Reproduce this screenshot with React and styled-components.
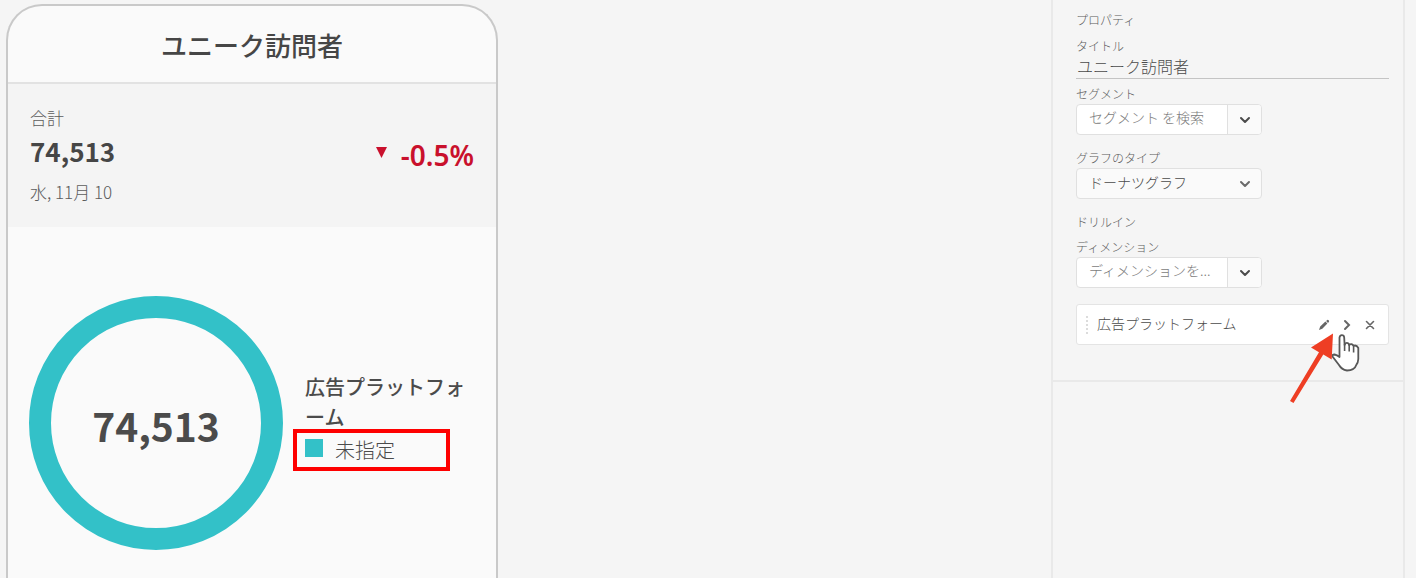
import React from "react";
import styled, { createGlobalStyle } from "styled-components";

const GlobalStyle = createGlobalStyle`
  *, *::before, *::after { box-sizing: border-box; }
  body {
    margin: 0;
    background: #f5f5f5;
    color: #4b4b4b;
    font-family: "Noto Sans CJK JP", "Noto Sans", sans-serif;
  }
  button, input, select { font: inherit; color: inherit; margin: 0; }
  h1, h2, h3, p { margin: 0; padding: 0; font-weight: inherit; }
`;

const Page = styled.div`
  display: flex;
  min-height: 100vh;
  padding-right: 11px;
`;

const Canvas = styled.main`
  flex: 1;
  display: flex;
  padding: 4px 0 0 6px;
`;

const Card = styled.article`
  width: 492px;
  background: #fafafa;
  border: 2px solid #c9c9c9;
  border-bottom: 0;
  border-radius: 36px 36px 0 0;
  overflow: hidden;
`;

const CardTitle = styled.h1`
  padding: 20px 0 18px;
  border-bottom: 2px solid #e2e2e2;
  text-align: center;
  font-size: 26px;
  line-height: 38px;
  font-weight: 500;
  color: #464646;
`;

const Summary = styled.section`
  display: flex;
  justify-content: space-between;
  align-items: center;
  padding: 20px 22px 21px;
  background: #f4f4f4;
`;

const SummaryNote = styled.p`
  font-size: 17px;
  line-height: 28px;
  font-weight: 300;
  color: #5c5c5c;
`;

const SummaryValue = styled.p`
  font-size: 26px;
  line-height: 38px;
  padding-bottom: 8px;
  font-weight: 700;
  color: #464646;
`;

const Change = styled.p`
  display: flex;
  align-items: center;
  gap: 14px;
  font-family: "Noto Sans", sans-serif;
  font-size: 28px;
  line-height: 36px;
  font-weight: 600;
  color: #c9102c;
`;

const ChartRow = styled.section`
  display: flex;
  align-items: center;
  gap: 22px;
  padding: 69px 20px 28px 21px;
`;

const Donut = styled.div`
  flex: none;
  display: flex;
  align-items: center;
  justify-content: center;
  width: 254px;
  height: 254px;
  border: 22px solid #33c1c8;
  border-radius: 50%;
  font-size: 39px;
  line-height: 60px;
  padding-top: 4px;
  font-weight: 700;
`;

const Legend = styled.div`
  flex: 1;
  min-width: 0;
  padding-bottom: 4px;
`;

const LegendTitle = styled.h2`
  font-size: 20px;
  line-height: 30px;
  font-weight: 500;
  line-break: anywhere;
`;

const LegendItem = styled.div`
  display: flex;
  align-items: center;
  gap: 12px;
  width: 157px;
  height: 42px;
  margin: -3px 0 0 -12px;
  padding: 0 8px;
  border: 4px solid #fe0000;
  font-size: 20px;
  line-height: 34px;
  font-weight: 300;
`;

const Swatch = styled.span`
  width: 18px;
  height: 18px;
  margin-bottom: 4px;
  background: #33c1c8;
`;

const Panel = styled.aside`
  width: 354px;
  border: 2px solid #e9e9e9;
  border-width: 0 2px;
  background: #f5f5f5;
  font-weight: 300;
`;

const Properties = styled.form`
  display: flex;
  flex-direction: column;
  gap: 15px;
  padding: 12px 14px 35px 23px;
  border-bottom: 2px solid #e9e9e9;
`;

const Group = styled.div`
  display: flex;
  flex-direction: column;
  gap: ${(p) => p.$gap}px;
`;

const Heading = styled.h3`
  font-size: 12px;
  line-height: 16px;
  color: #5c5c5c;
`;

const Field = styled.div`
  display: flex;
  flex-direction: column;
  gap: 2px;
`;

const Label = styled.label`
  font-size: 12px;
  line-height: 16px;
  color: #5c5c5c;
`;

const TitleInput = styled.input`
  width: 100%;
  height: 23px;
  padding: 0 0 2px 1px;
  border: 0;
  border-bottom: 1px solid #c4c4c4;
  outline: 0;
  background: none;
  font-size: 16px;
`;

const Control = styled.div`
  position: relative;
  display: flex;
  width: 186px;
  height: 31px;
  border: 1px solid #e0e0e0;
  border-radius: 4px;
  overflow: hidden;
  background: ${(p) => (p.$muted ? "#fafafa" : "#fff")};
`;

const SearchInput = styled.input`
  flex: 1;
  min-width: 0;
  padding: 0 0 5px 12px;
  border: 0;
  outline: 0;
  background: none;
  font-size: 14px;
  &::placeholder { color: #7c7c7c; opacity: 1; }
`;

const OpenButton = styled.button`
  display: flex;
  align-items: center;
  justify-content: center;
  width: 34px;
  padding: 0;
  border: 0;
  border-left: 1px solid #e0e0e0;
  background: #fafafa;
`;

const TypeSelect = styled.select`
  width: 100%;
  padding: 0 34px 4px 12px;
  border: 0;
  outline: 0;
  appearance: none;
  background: none;
  font-size: 14px;
`;

const SelectMark = styled.span`
  position: absolute;
  inset: 0 0 0 auto;
  display: flex;
  align-items: center;
  justify-content: center;
  width: 33px;
  pointer-events: none;
`;

const Dimension = styled.div`
  position: relative;
  display: flex;
  align-items: center;
  height: 41px;
  margin-top: 1px;
  padding: 0 7px 0 9px;
  border: 1px solid #e4e4e4;
  border-radius: 3px;
  background: #fff;
`;

const Grip = styled.span`
  width: 2px;
  height: 18px;
  margin-right: 9px;
  border-left: 2px dotted #dcdcdc;
`;

const DimensionName = styled.span`
  flex: 1;
  padding-bottom: 4px;
  font-size: 14px;
  line-height: 20px;
`;

const IconButton = styled.button`
  display: flex;
  align-items: center;
  justify-content: center;
  width: 23px;
  height: 24px;
  padding: 0;
  border: 0;
  background: none;
`;

const Pointer = styled.svg`
  position: absolute;
  top: 25px;
  right: 27px;
  pointer-events: none;
`;

const Chevron = ({ color = "#4b4b4b" }) => (
  <svg width="12" height="8" viewBox="0 0 12 8" fill="none" aria-hidden="true">
    <path d="M2 2L6 6L10 2" stroke={color} strokeWidth="2" strokeLinecap="round" strokeLinejoin="round" />
  </svg>
);

function SearchField({ id, label, placeholder }) {
  return (
    <Field>
      <Label htmlFor={id}>{label}</Label>
      <Control>
        <SearchInput id={id} placeholder={placeholder} />
        <OpenButton type="button" aria-label={label}>
          <Chevron />
        </OpenButton>
      </Control>
    </Field>
  );
}

export default function App() {
  return (
    <>
      <GlobalStyle />
      <Page lang="ja">
        <Canvas>
          <Card>
            <CardTitle>ユニーク訪問者</CardTitle>
            <Summary>
              <div>
                <SummaryNote>合計</SummaryNote>
                <SummaryValue>74,513</SummaryValue>
                <SummaryNote>水, 11月 10</SummaryNote>
              </div>
              <Change>
                <svg width="11" height="18" viewBox="0 0 11 18" aria-hidden="true">
                  <path d="M0 1H11L5.5 12Z" fill="#c9102c" />
                </svg>
                -0.5%
              </Change>
            </Summary>
            <ChartRow>
              <Donut>74,513</Donut>
              <Legend>
                <LegendTitle>広告プラットフォーム</LegendTitle>
                <LegendItem>
                  <Swatch />
                  未指定
                </LegendItem>
              </Legend>
            </ChartRow>
          </Card>
        </Canvas>
        <Panel>
          <Properties onSubmit={(e) => e.preventDefault()}>
            <Group $gap={10}>
              <Heading>プロパティ</Heading>
              <Group $gap={7}>
                <Field>
                  <Label htmlFor="title">タイトル</Label>
                  <TitleInput id="title" defaultValue="ユニーク訪問者" />
                </Field>
                <SearchField id="segment" label="セグメント" placeholder="セグメント を検索" />
              </Group>
            </Group>
            <Field>
              <Label htmlFor="chart">グラフのタイプ</Label>
              <Control $muted>
                <TypeSelect id="chart">
                  <option>ドーナツグラフ</option>
                </TypeSelect>
                <SelectMark>
                  <Chevron color="#6a6a6a" />
                </SelectMark>
              </Control>
            </Field>
            <Group $gap={9}>
              <Heading>ドリルイン</Heading>
              <SearchField id="dimension" label="ディメンション" placeholder="ディメンションを..." />
            </Group>
            <Dimension>
              <Grip />
              <DimensionName>広告プラットフォーム</DimensionName>
              <IconButton type="button" aria-label="編集">
                <svg width="12" height="12" viewBox="0 0 12 12" fill="#666" aria-hidden="true">
                  <path d="M1 11L2.2 7.6L7.4 2.6L9.4 4.6L4.3 9.8ZM8.1 2L9.3 1Q10 .6 10.6 1.3L11 1.8Q11.3 2.3 10.8 2.9L10 3.9Z" />
                </svg>
              </IconButton>
              <IconButton type="button" aria-label="開く">
                <svg width="8" height="12" viewBox="0 0 8 12" fill="none" aria-hidden="true">
                  <path d="M2 2L6 6L2 10" stroke="#666" strokeWidth="2" strokeLinecap="round" />
                </svg>
              </IconButton>
              <IconButton type="button" aria-label="削除">
                <svg width="10" height="10" viewBox="0 0 10 10" fill="none" aria-hidden="true">
                  <path d="M1.5 1.5L8.5 8.5M8.5 1.5L1.5 8.5" stroke="#666" strokeWidth="1.6" strokeLinecap="round" />
                </svg>
              </IconButton>
              <Pointer width="72" height="76" viewBox="1289 330 72 76" aria-hidden="true">
                <path
                  d="M1339.500 337.500Q1340 335.200 1341.800 335.200Q1344 335.200 1344.200 337.500L1344.600 345Q1346 341.800 1348.500 343.500L1349.200 345Q1351.500 343 1353.500 345.800Q1356.500 344.500 1358.300 348V359Q1358 363 1356.500 364.500Q1354.500 370.500 1347 370.500Q1341.500 369.500 1339 365L1332.500 356.500Q1331.800 354.500 1334.500 354.500Q1337 355 1339.500 357Z"
                  fill="#fff" stroke="#585858" strokeWidth="1.8" strokeLinejoin="round"
                />
                <path d="M1344.600 344V351M1349.200 345V351.500M1353.600 346V352.500" fill="none" stroke="#585858" strokeWidth="1.6" />
                <path d="M1333 333.500L1331.700 359.500L1323.300 354.500L1293.500 403L1290 401L1319 352.200L1311 347.500Z" fill="#ee3e24" />
              </Pointer>
            </Dimension>
          </Properties>
        </Panel>
      </Page>
    </>
  );
}
